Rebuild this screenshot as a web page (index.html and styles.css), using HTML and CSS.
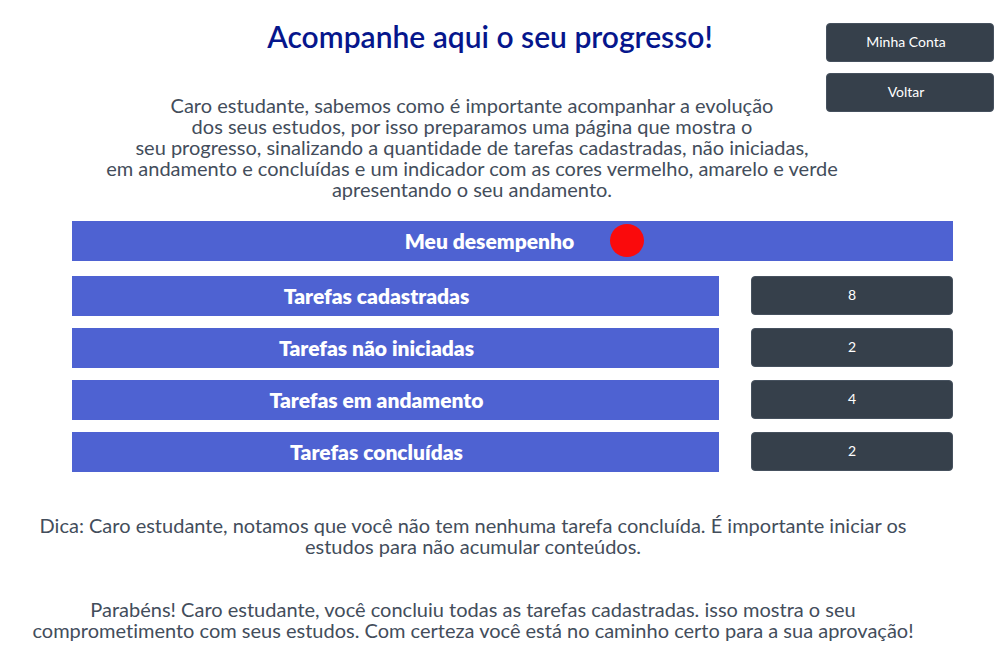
FILE: index.html
```html
<!DOCTYPE html>
<html lang="pt-BR">
<head>
<meta charset="utf-8">
<meta name="viewport" content="width=device-width, initial-scale=1">
<title>Meu progresso</title>
<link rel="stylesheet" href="styles.css">
</head>
<body>
<header class="top">
  <div class="intro">
    <h1 class="title">Acompanhe aqui o seu progresso!</h1>
    <p class="text lead">Caro estudante, sabemos como é importante acompanhar a evolução<br>dos seus estudos, por isso preparamos uma página que mostra o<br>seu progresso, sinalizando a quantidade de tarefas cadastradas, não iniciadas,<br>em andamento e concluídas e um indicador com as cores vermelho, amarelo e verde<br>apresentando o seu andamento.</p>
  </div>
  <nav class="actions">
    <button class="dark" type="button">Minha Conta</button>
    <button class="dark" type="button">Voltar</button>
  </nav>
</header>
<main class="board">
  <h2 class="bar heading"><span>Meu desempenho</span><span class="status" role="img" aria-label="Indicador vermelho"></span></h2>
  <div class="row"><div class="bar label">Tarefas cadastradas</div><button class="dark count" type="button">8</button></div>
  <div class="row"><div class="bar label">Tarefas não iniciadas</div><button class="dark count" type="button">2</button></div>
  <div class="row"><div class="bar label">Tarefas em andamento</div><button class="dark count" type="button">4</button></div>
  <div class="row"><div class="bar label">Tarefas concluídas</div><button class="dark count" type="button">2</button></div>
</main>
<footer class="tips">
  <p class="text">Dica: Caro estudante, notamos que você não tem nenhuma tarefa concluída. É importante iniciar os<br>estudos para não acumular conteúdos.</p>
  <p class="text">Parabéns! Caro estudante, você concluiu todas as tarefas cadastradas. isso mostra o seu<br>comprometimento com seus estudos. Com certeza você está no caminho certo para a sua aprovação!</p>
</footer>
</body>
</html>
```
FILE: styles.css
```css
* {
  box-sizing: border-box;
}

body {
  margin: 0;
  background: #fff;
  color: #434d5b;
  font-family: Lato, "Liberation Sans", sans-serif;
  font-variant-ligatures: none;
}

.top {
  display: flex;
  padding-right: 6px;
}

.intro {
  flex: 1;
  min-width: 0;
  padding: 18px 0 0 94px;
  text-align: center;
}

.title {
  margin: 0 0 41px;
  padding-left: 60px;
  color: #06168c;
  font-size: 30px;
  font-weight: 600;
  line-height: 36px;
}

.text {
  margin: 0;
  font-size: 20px;
  line-height: 21px;
  text-align: center;
}

.lead {
  margin-right: -24px;
}

.actions {
  display: flex;
  flex: none;
  flex-direction: column;
  align-self: flex-start;
  gap: 11px;
  width: 168px;
  padding-top: 23px;
}

.dark {
  height: 39px;
  padding: 0 8px 3px 0;
  border: 1px solid #46515e;
  border-radius: 4px;
  background: #36404b;
  color: #fff;
  font-family: inherit;
  font-size: 14px;
}

.board {
  display: flex;
  flex-direction: column;
  gap: 12px;
  padding: 21px 47px 0 72px;
}

.bar {
  display: flex;
  align-items: center;
  justify-content: center;
  height: 40px;
  margin: 0;
  padding-bottom: 2px;
  background: #4e62d2;
  color: #fff;
  font-size: 21px;
  font-weight: 800;
}

.heading {
  gap: 36px;
  margin-bottom: 3px;
  padding-left: 24px;
}

.status {
  width: 34px;
  height: 33px;
  border-radius: 50%;
  background: #fa0a0c;
}

.row {
  display: flex;
  gap: 32px;
}

.label {
  flex: 1;
  padding-right: 38px;
}

.count {
  width: 202px;
  padding-right: 0;
}

.tips {
  display: flex;
  flex-direction: column;
  gap: 42px;
  padding: 43px 54px 0 0;
}
```
